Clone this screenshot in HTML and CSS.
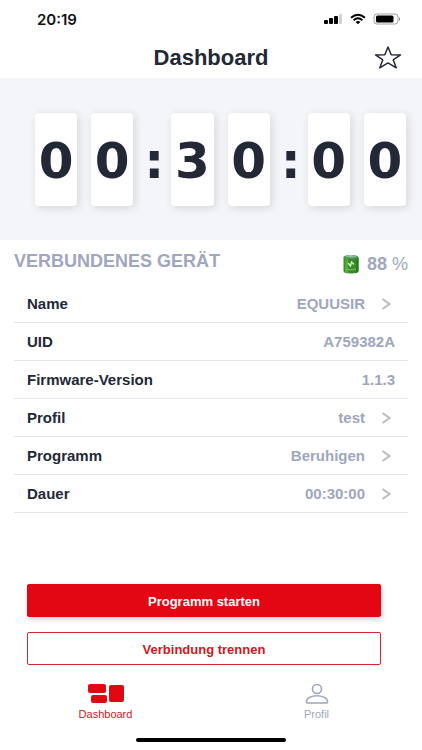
FILE: index.html
```html
<!DOCTYPE html>
<html lang="de">
<head>
<meta charset="utf-8">
<meta name="viewport" content="width=device-width, initial-scale=1">
<title>Dashboard</title>
<link rel="stylesheet" href="styles.css">
</head>
<body>
<div class="status-bar">
  <time>20:19</time>
  <div class="status-icons">
    <svg width="20" height="12" viewBox="0 0 20 12" aria-hidden="true">
      <rect x="1" y="7" width="4" height="4" rx="1"/>
      <rect x="6" y="5" width="4" height="6" rx="1"/>
      <rect x="11" y="3" width="4" height="8" rx="1"/>
      <rect x="16" y="1" width="3" height="10" rx="1" fill="#d2d2d2"/>
    </svg>
    <svg width="16" height="12" viewBox="0 0 16 12" aria-hidden="true">
      <path d="M1 4.8Q8-1.4 15 4.8M3.6 7.2Q8 3.4 12.4 7.2" fill="none" stroke="#000" stroke-width="1.9"/>
      <path d="M5.6 9Q8 7 10.4 9L8 11.2Z"/>
    </svg>
    <svg width="28" height="12" viewBox="0 0 28 12" aria-hidden="true">
      <rect x="1" y="1" width="24" height="10" rx="3" fill="#fff" stroke="#a2a2a2"/>
      <rect x="3" y="2.5" width="17.5" height="7" rx="1.5"/>
      <path d="M26 4Q28.200 6 26 8Z" fill="#8c8c8c"/>
    </svg>
  </div>
</div>
<header class="title-bar">
  <h1>Dashboard</h1>
  <button class="favorite" type="button" aria-label="Favorit">
    <svg width="28" height="24" viewBox="0 0 28 24" aria-hidden="true">
      <path d="M14 1L17.200 8.800L26.500 8.900L19.200 13.800L22.200 21.800L14 16.900L5.800 21.800L8.800 13.800L1.500 8.900L10.800 8.800Z" fill="none" stroke="#232836" stroke-width="1.500" stroke-linejoin="round"/>
    </svg>
  </button>
</header>
<main>
  <section class="timer" aria-label="Timer">
    <div class="pair"><span class="digit">0</span><span class="digit">0</span></div>
    <span class="colon">:</span>
    <div class="pair"><span class="digit">3</span><span class="digit">0</span></div>
    <span class="colon">:</span>
    <div class="pair"><span class="digit">0</span><span class="digit">0</span></div>
  </section>
  <section class="device">
    <div class="device-head">
      <h2>VERBUNDENES GERÄT</h2>
      <div class="charge">
        <svg width="16" height="20" viewBox="0 0 16 20" aria-hidden="true">
          <path d="M.5 3V17Q.5 19.500 8 19.500T15.500 17V3Z" fill="#388e26"/>
          <path d="M2 4V18.200Q3 18.800 5 19V4Z" fill="#56a83c"/>
          <path d="M13 4H15.500V17Q15 18.500 13 18.900Z" fill="#287b20"/>
          <ellipse cx="8" cy="3" rx="7.500" ry="2" fill="#4e9550"/>
          <ellipse cx="8" cy="2.600" rx="5.500" ry="1.100" fill="#8bb8a0"/>
          <ellipse cx="8" cy="1.700" rx="2" ry=".8" fill="#a9c7bb"/>
          <path d="M5 9L7.500 12L8.500 8L11 10.500" fill="none" stroke="#d8efca" stroke-width="1.300"/>
          <path d="M3 15Q8 16.800 13 15" fill="none" stroke="#83bb65"/>
        </svg>
        <span>88 <span class="unit">%</span></span>
      </div>
    </div>
    <ul class="rows">
      <li><button class="row" type="button"><span class="label">Name</span><span class="value">EQUUSIR</span><svg class="chevron" viewBox="0 0 10 12" aria-hidden="true"><path d="M1.500 1L8.500 6L1.500 11"/></svg></button></li>
      <li><div class="row"><span class="label">UID</span><span class="value">A759382A</span></div></li>
      <li><div class="row"><span class="label">Firmware-Version</span><span class="value">1.1.3</span></div></li>
      <li><button class="row" type="button"><span class="label">Profil</span><span class="value">test</span><svg class="chevron" viewBox="0 0 10 12" aria-hidden="true"><path d="M1.500 1L8.500 6L1.500 11"/></svg></button></li>
      <li><button class="row" type="button"><span class="label">Programm</span><span class="value">Beruhigen</span><svg class="chevron" viewBox="0 0 10 12" aria-hidden="true"><path d="M1.500 1L8.500 6L1.500 11"/></svg></button></li>
      <li><button class="row" type="button"><span class="label">Dauer</span><span class="value">00:30:00</span><svg class="chevron" viewBox="0 0 10 12" aria-hidden="true"><path d="M1.500 1L8.500 6L1.500 11"/></svg></button></li>
    </ul>
  </section>
  <div class="actions">
    <button class="action primary" type="button">Programm starten</button>
    <button class="action" type="button">Verbindung trennen</button>
  </div>
</main>
<nav class="tabs" aria-label="Hauptnavigation">
  <a class="tab active" href="#dashboard" aria-current="page">
    <svg width="36" height="20" viewBox="0 0 36 20" aria-hidden="true">
      <rect x="0" y="0" width="18" height="9" rx="2"/>
      <rect x="3" y="11" width="16" height="8" rx="2"/>
      <rect x="21" y="1" width="15" height="17" rx="2"/>
    </svg>
    <span>Dashboard</span>
  </a>
  <a class="tab" href="#profil">
    <svg width="24" height="20" viewBox="0 0 24 20" fill="none" stroke="#9ea7bd" stroke-width="1.600" aria-hidden="true">
      <circle cx="12" cy="5" r="4.500"/>
      <path d="M3 19Q1.300 19 1.400 17.400C2.600 9.800 21.400 9.800 22.600 17.400Q22.700 19 21 19Z"/>
    </svg>
    <span>Profil</span>
  </a>
</nav>
<div class="home-indicator"></div>
</body>
</html>
```
FILE: styles.css
```css
* {
  box-sizing: border-box;
}

body {
  margin: 0;
  min-height: 100vh;
  display: flex;
  flex-direction: column;
  background: #fff;
  color: #232836;
  font-family: "Liberation Sans", Arial, sans-serif;
}

button {
  margin: 0;
  padding: 0;
  border: 0;
  background: none;
  color: inherit;
  font: inherit;
  cursor: pointer;
}

svg {
  display: block;
  flex: none;
}

.status-bar {
  height: 38px;
  padding: 0 21px 0 37px;
  display: flex;
  align-items: center;
  justify-content: space-between;
  color: #111;
  font: 600 15px "Inter", sans-serif;
}

.status-icons {
  display: flex;
  gap: 7px;
}

.title-bar {
  height: 40px;
  padding: 0 20px;
  display: grid;
  grid-template-columns: 28px 1fr 28px;
  align-items: center;
}

h1 {
  grid-column: 2;
  margin: 0;
  text-align: center;
  font-size: 22px;
  line-height: 24px;
}

main {
  flex: 1;
  display: flex;
  flex-direction: column;
}

.timer {
  padding: 35px 16px 34px 35px;
  display: flex;
  align-items: center;
  background: #f4f5f8;
  font: 700 50px "DejaVu Sans", sans-serif;
}

.pair {
  flex: 1;
  display: flex;
  gap: 14px;
}

.digit {
  flex: 1 1 0;
  height: 93px;
  padding-top: 2px;
  display: flex;
  align-items: center;
  justify-content: center;
  border-radius: 4px;
  background: #fff;
  box-shadow: 2px 2px 8px rgba(35, 40, 54, 0.14);
}

.colon {
  width: 38px;
  padding: 2px 0 0 4px;
  display: flex;
  justify-content: center;
}

.device {
  padding: 0 14px;
}

.device-head {
  height: 45px;
  display: flex;
  align-items: flex-start;
  justify-content: space-between;
  color: #9ea7bd;
}

h2 {
  margin: 11px 0 0;
  font-size: 18px;
  line-height: 20px;
}

.charge {
  margin-top: 14px;
  display: flex;
  align-items: center;
  gap: 8px;
  font-size: 18px;
  font-weight: 700;
  line-height: 20px;
}

.unit {
  font-weight: 400;
}

.rows {
  margin: 0;
  padding: 0;
  list-style: none;
}

.rows li {
  border-bottom: 1px solid #e6e6e9;
}

.row {
  width: 100%;
  height: 37px;
  padding: 0 13px;
  display: flex;
  align-items: center;
  font-size: 15px;
  font-weight: 700;
}

.value {
  margin-left: auto;
  color: #9ea7bd;
}

.chevron {
  width: 10px;
  height: 12px;
  margin: 0 4px 0 16px;
  fill: none;
  stroke: #bcbcc0;
  stroke-width: 2;
}

.actions {
  margin-top: auto;
  padding: 24px 41px 0 27px;
  display: flex;
  flex-direction: column;
  gap: 15px;
}

.action {
  height: 33px;
  padding-top: 1px;
  border: 1px solid #d72630;
  border-radius: 2px;
  color: #cf1722;
  font-size: 13px;
  font-weight: 700;
}

.primary {
  border-color: #e30613;
  background: #e30613;
  color: #fff;
  box-shadow: 1px 2px 5px rgba(35, 40, 54, 0.25);
}

.tabs {
  padding-top: 19px;
  display: grid;
  grid-template-columns: 1fr 1fr;
}

.tab {
  display: flex;
  flex-direction: column;
  align-items: center;
  gap: 4px;
  color: #9ea7bd;
  font-size: 11px;
  line-height: 13px;
  text-decoration: none;
}

.active {
  color: #cf1722;
  fill: #e30613;
}

.home-indicator {
  width: 150px;
  height: 4px;
  margin: 17px auto 8px;
  border-radius: 2px;
  background: #000;
}
```
